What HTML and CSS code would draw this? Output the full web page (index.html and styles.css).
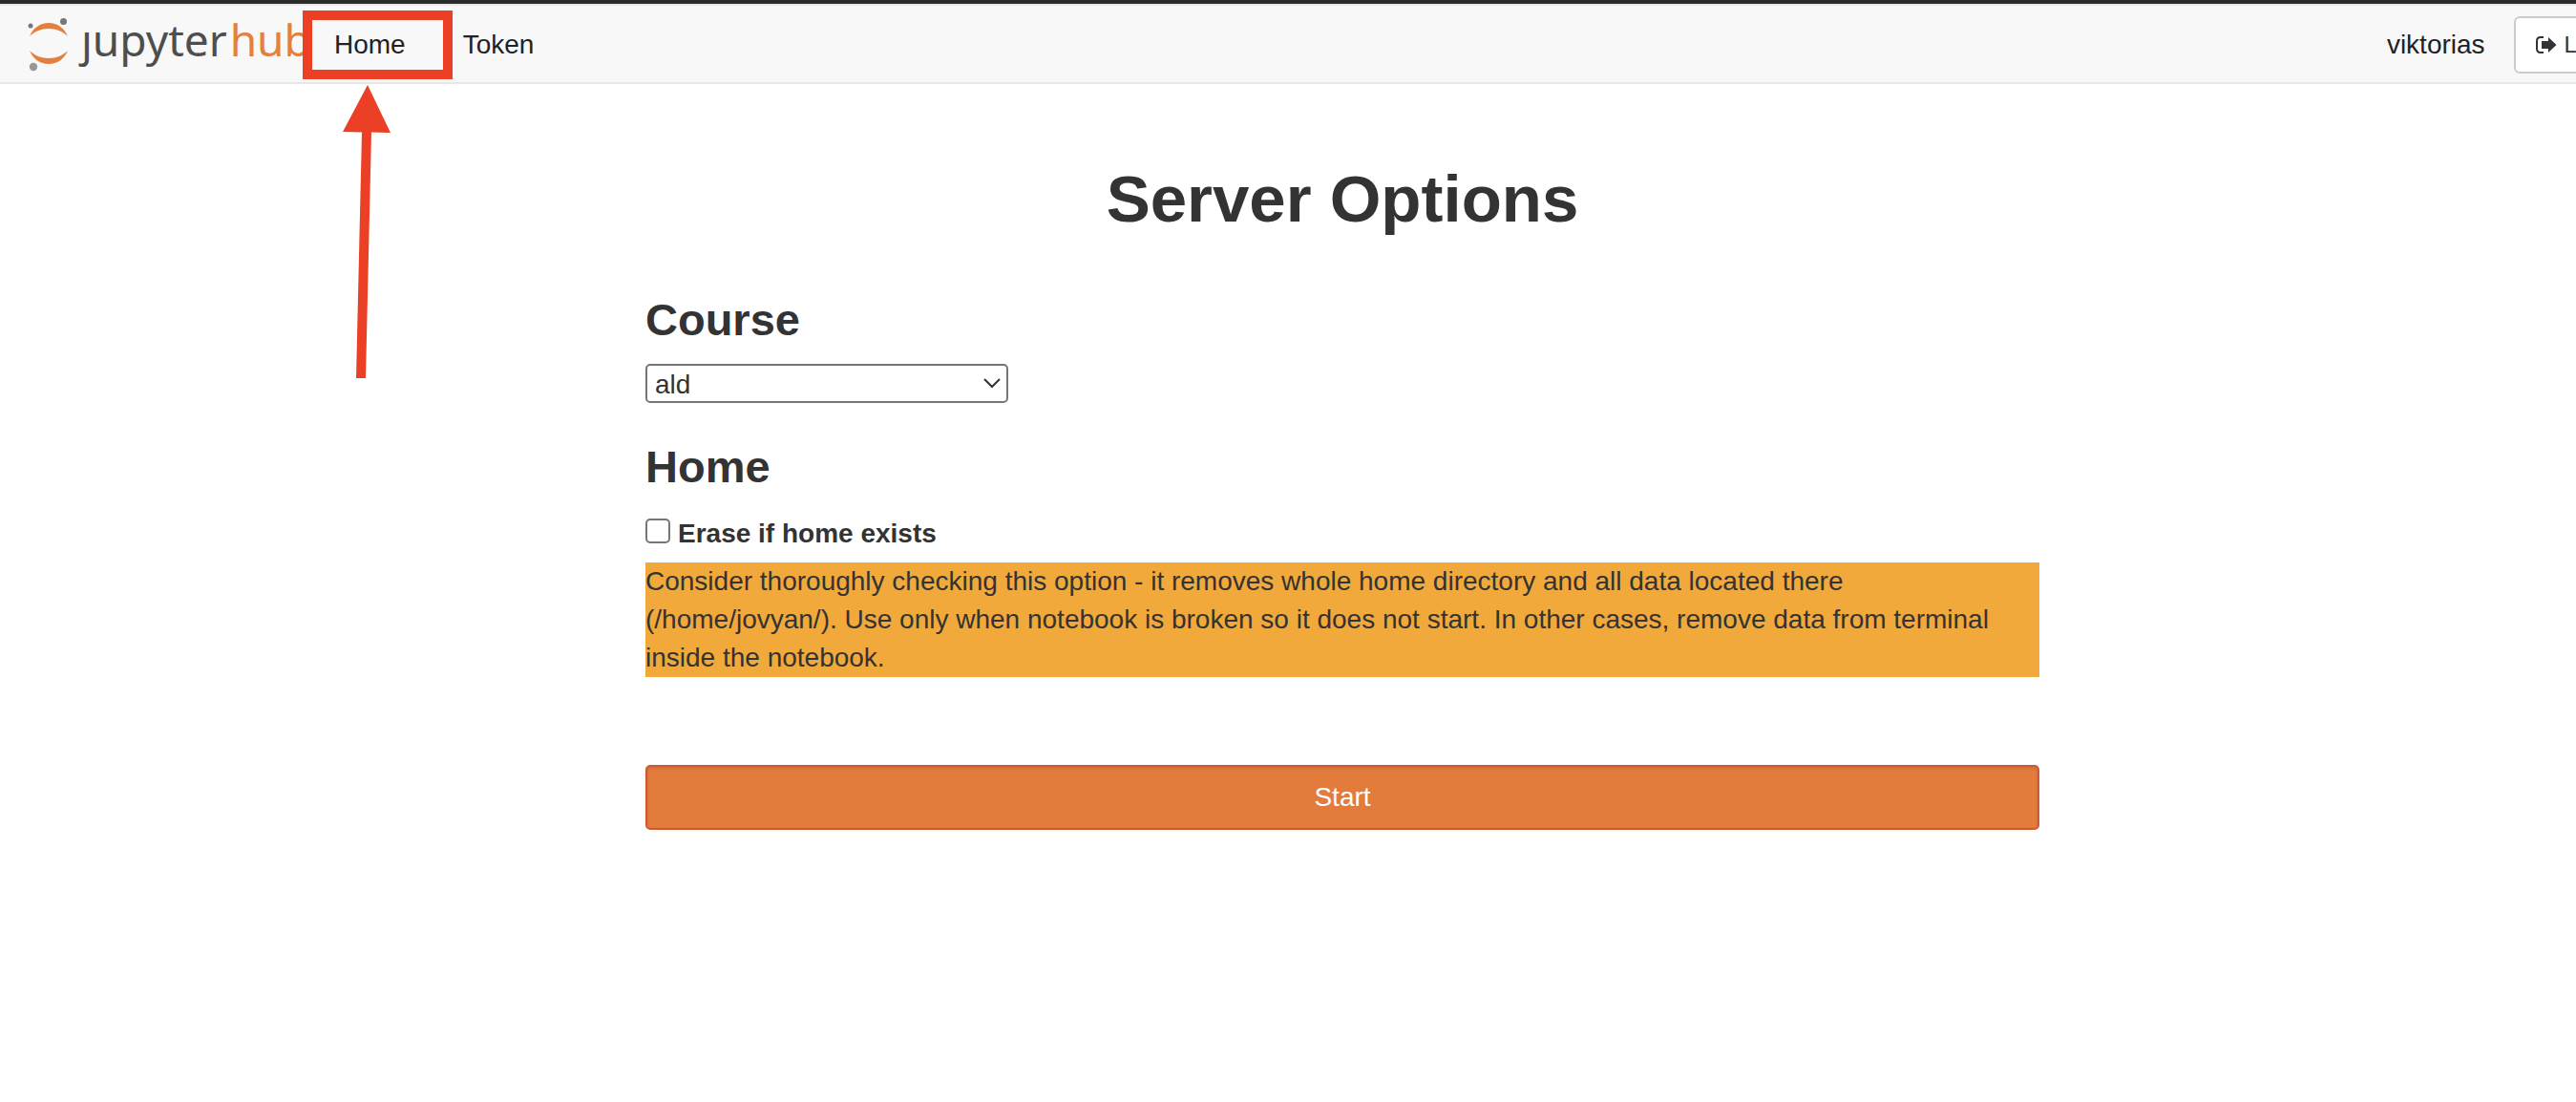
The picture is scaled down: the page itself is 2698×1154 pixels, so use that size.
FILE: index.html
```html
<!DOCTYPE html>
<html lang="en">
<head>
<meta charset="utf-8">
<title>JupyterHub</title>
<link rel="stylesheet" href="styles.css">
</head>
<body>
<div class="page">
  <header class="navbar">
    <a class="brand" href="#">
      <svg class="brand-mark" width="42" height="56" viewBox="0 0 42 56" aria-hidden="true">
        <path fill="#e57f3d" d="M1 19C5 10 12 5 21 5s16 5 20 14C36 14 29 11 21 11S6 14 1 19z"/>
        <path fill="#e57f3d" d="M1 34c5 5 12 8 20 8s15-3 20-8c-4 9-11 14-20 14S5 43 1 34z"/>
        <circle cx="36.500" cy="3.500" r="3.500" fill="#767677"/>
        <circle cx="2" cy="8" r="2.500" fill="#767677"/>
        <circle cx="5" cy="51" r="4.200" fill="#989798"/>
      </svg>
      <span class="brand-name">ȷupyter<span class="brand-hub">hub</span></span>
    </a>
    <nav class="links">
      <a class="link marked" href="#">Home
        <svg class="arrow" width="50" height="308" viewBox="0 0 50 308" aria-hidden="true">
          <path fill="#eb4026" d="M26 0L50 50L30 49.500L24 307H14L20 49.500L0 49z"/>
        </svg>
      </a>
      <a class="link" href="#">Token</a>
    </nav>
    <div class="account">
      <span class="user">viktorias</span>
      <a class="logout" href="#">
        <svg width="22" height="18" viewBox="0 0 22 18" aria-hidden="true">
          <path d="M8 1H5Q1 1 1 5v8q0 4 4 4h3" fill="none" stroke="#333" stroke-width="2"/>
          <path d="M6 5h7V1l8.500 8L13 17v-4H6z" fill="#333"/>
        </svg>
        Logout
      </a>
    </div>
  </header>
  <main class="content">
    <h1>Server Options</h1>
    <form>
      <h2><label for="course">Course</label></h2>
      <div class="select-wrap">
        <select id="course"><option>ald</option></select>
        <svg class="chevron" width="18" height="11" viewBox="0 0 18 11" aria-hidden="true">
          <path d="M1 1l8 8 8-8" fill="none" stroke="#333" stroke-width="2"/>
        </svg>
      </div>
      <h2>Home</h2>
      <div class="check">
        <input type="checkbox" id="erase">
        <label for="erase">Erase if home exists</label>
      </div>
      <p class="warning">Consider thoroughly checking this option - it removes whole home directory and all data located there (/home/jovyan/). Use only when notebook is broken so it does not start. In other cases, remove data from terminal inside the notebook.</p>
      <button class="start" type="button">Start</button>
    </form>
  </main>
</div>
</body>
</html>
```

FILE: styles.css
```css
* {
  box-sizing: border-box;
}

body {
  margin: 0;
  overflow-x: hidden;
  background: #fff;
  color: #333;
  font: 28px/40px "Liberation Sans", Arial, sans-serif;
}

/* The page is wider than the window, so the logout button runs off the edge */
.page {
  margin-right: -114px;
  border-top: 4px solid #2b2b2b;
}

.navbar {
  display: flex;
  align-items: center;
  height: 84px;
  padding: 2px 30px 0;
  border: solid #e7e7e7;
  border-width: 2px 0;
  background: #f8f8f8;
}

.brand {
  display: flex;
  align-items: center;
  gap: 13px;
  width: 292px;
  color: #4e4e4e;
  text-decoration: none;
}

.brand-mark {
  overflow: visible;
}

.brand-name {
  padding-bottom: 12px;
  font: 46px/56px "Noto Sans", sans-serif;
}

.brand-hub {
  margin-left: 3px;
  color: #e57f3d;
}

.links {
  display: flex;
  gap: 60px;
  padding-left: 28px;
}

.link {
  color: #222;
  text-decoration: none;
}

.marked {
  position: relative;
}

.marked::before {
  content: "";
  position: absolute;
  inset: -16px -49px -16px -33px;
  border: 10px solid #eb4026;
}

.arrow {
  position: absolute;
  top: 62px;
  left: 9px;
}

.account {
  display: flex;
  align-items: center;
  gap: 30px;
  margin-left: auto;
}

.user {
  color: #222;
}

.logout {
  display: flex;
  align-items: center;
  gap: 8px;
  height: 60px;
  padding: 0 21px;
  border: 2px solid #ccc;
  border-radius: 6px;
  background: #fff;
  color: #333;
  font-size: 24px;
  text-decoration: none;
}

.content {
  max-width: 1460px;
  margin: 0 auto;
  padding: 81px 0 48px;
}

h1 {
  margin: 0 0 60px;
  font-size: 69px;
  line-height: 80px;
  text-align: center;
}

h2 {
  margin: 0 0 20px;
  font-size: 47px;
  line-height: 52px;
}

.select-wrap {
  position: relative;
  width: 380px;
  margin-bottom: 41px;
}

select {
  display: block;
  width: 100%;
  height: 41px;
  padding: 0 8px;
  border: 2px solid #767676;
  border-radius: 5px;
  appearance: none;
  background: #fff;
  color: #333;
  font: inherit;
}

.chevron {
  position: absolute;
  top: 15px;
  right: 8px;
}

.check {
  display: flex;
  align-items: center;
  gap: 8px;
  font-weight: bold;
}

.check input {
  width: 26px;
  height: 26px;
  margin: 0 0 6px;
  border: 2px solid #767676;
  border-radius: 5px;
  appearance: none;
  background: #fff;
}

h2 + .check {
  margin-top: 24px;
}

.warning {
  margin: 10px 0 92px;
  background: #f1a93b;
}

.start {
  display: block;
  width: 100%;
  height: 68px;
  border: 2px solid #cd5a2f;
  border-radius: 5px;
  background: #e37b3c;
  box-shadow: inset 0 2px 3px rgba(0, 0, 0, 0.1);
  color: #fff;
  font: inherit;
}
```
